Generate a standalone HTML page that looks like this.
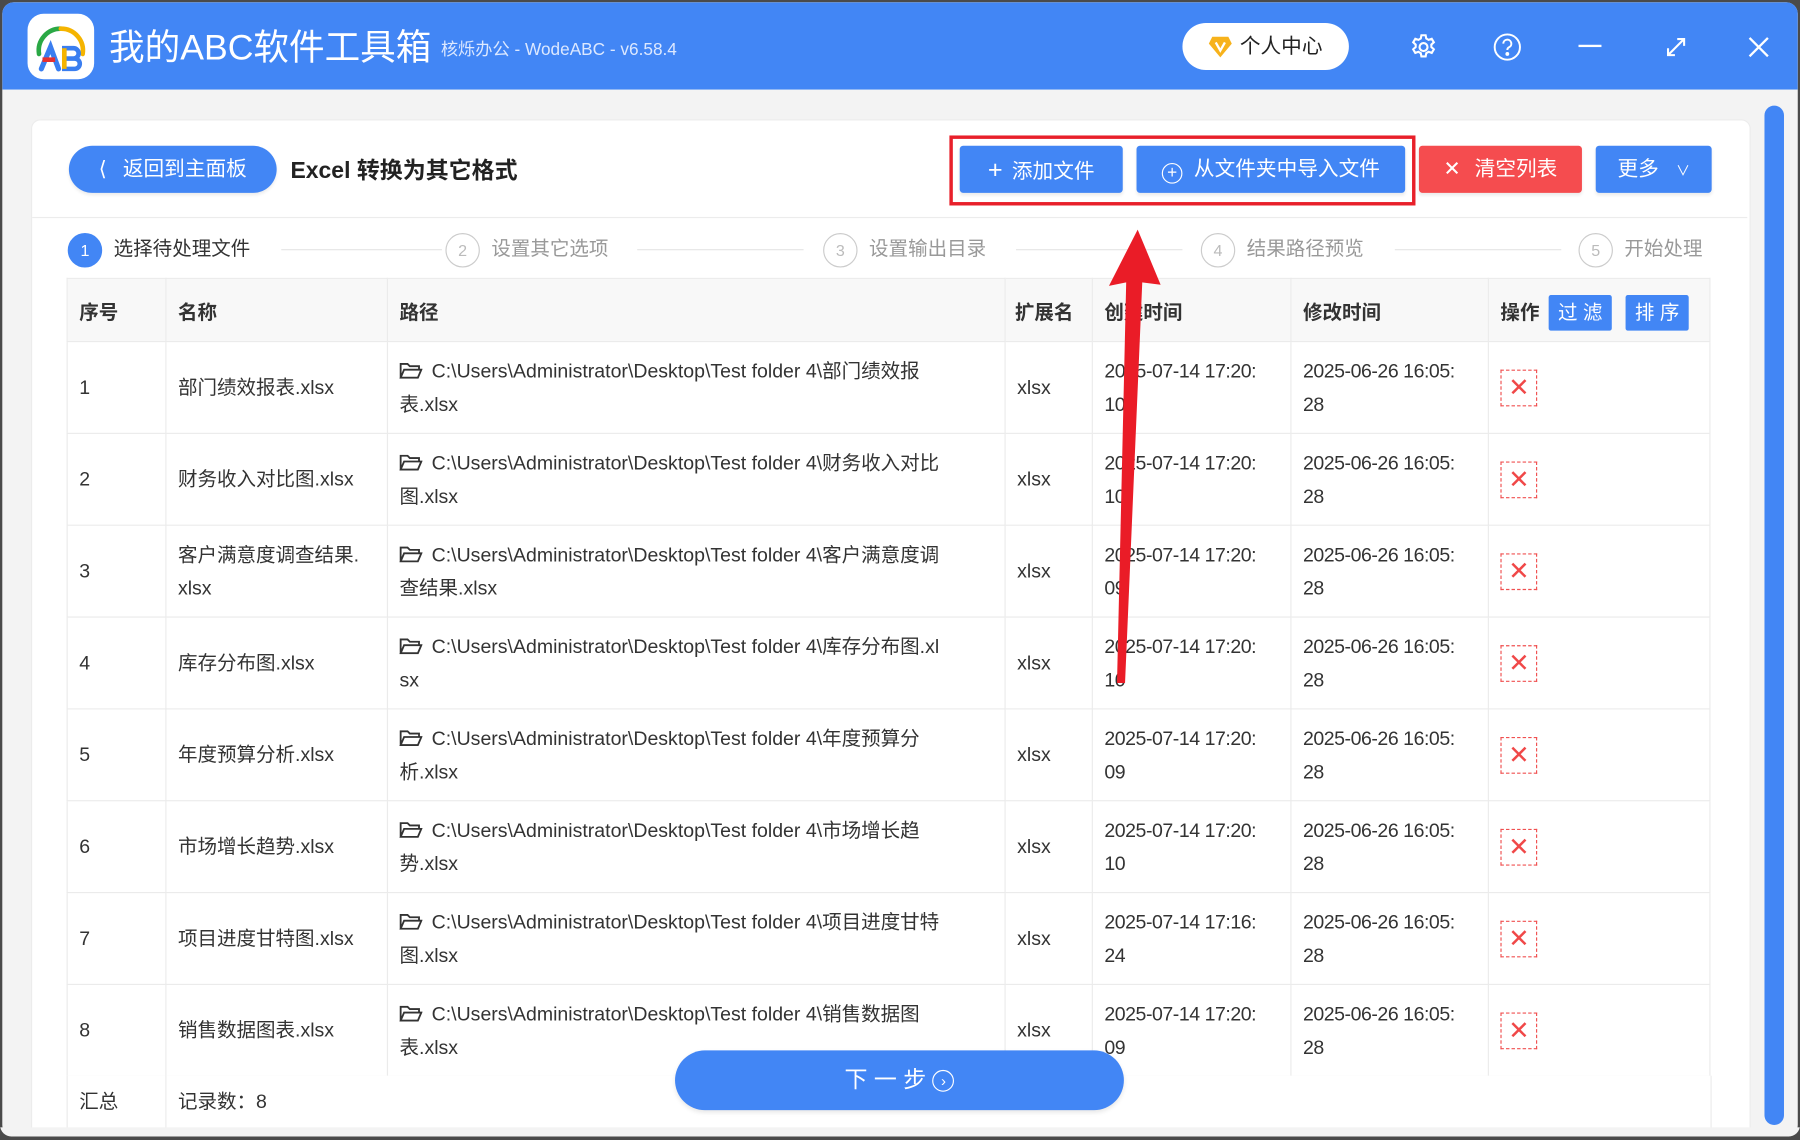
<!DOCTYPE html>
<html><head><meta charset="utf-8"><style>
html,body{margin:0;padding:0;width:1800px;height:1140px;overflow:hidden;background:#4a4a4a;}
#w{position:absolute;left:0;top:0;width:1568px;height:990px;overflow:hidden;transform:scale(1.148);transform-origin:0 0;font-family:"Liberation Sans","Noto Sans CJK SC",sans-serif;color:#333;border-radius:10px;}
.win{position:absolute;left:2px;top:2px;width:1564px;height:988px;background:#f3f3f3;border-radius:10px;overflow:hidden;}
.hdr{position:absolute;left:0;top:0;width:1564px;height:76px;background:#4286f5;}
.abs{position:absolute;}
.card{position:absolute;left:25px;top:102px;width:1496px;height:890px;background:#fff;border:1px solid #ececec;border-radius:8px;}
.btn{position:absolute;top:127px;height:41px;background:#4286f5;color:#fff;font-size:18px;line-height:41px;text-align:center;border-radius:3px;box-shadow:0 2px 3px rgba(0,0,0,.08);}
.step{position:absolute;top:202px;font-size:17px;color:#999;line-height:30px;}
.circ{display:inline-block;width:28px;height:28px;border:1px solid #ccc;border-radius:50%;text-align:center;line-height:28px;font-size:14px;color:#bbb;vertical-align:middle;margin-right:10px;}
.sline{position:absolute;top:217px;height:1px;background:#e6e6e6;}
table{position:absolute;left:58px;top:242px;border-collapse:collapse;table-layout:fixed;font-size:17px;}
td,th{border:1px solid #ebebeb;padding:0 10px;vertical-align:middle;text-align:left;line-height:29px;white-space:nowrap;}
th{height:50px;padding-top:4px;background:#f8f8f8;font-weight:bold;color:#333;}
td{height:79px;color:#333;}
td.d{letter-spacing:-0.4px;}
.del{display:inline-block;width:30px;height:30px;border:1px dashed #f05050;color:#f04848;text-align:center;line-height:30px;font-size:22px;}
.sm{display:inline-block;width:55px;height:31px;background:#4286f5;color:#fff;text-align:center;line-height:31px;font-weight:normal;border-radius:2px;margin-left:8px;}
.fd{display:inline-block;width:20px;height:14px;vertical-align:-1px;margin-right:8px;}
</style></head><body><div id="w">
<div class="win">
<div class="hdr">
 <div class="abs" style="left:22px;top:10px;width:58px;height:57px;background:#fff;border-radius:14px;">
  <svg width="58" height="57" viewBox="0 0 58 57"><path d="M10 35 A19 19 0 0 1 29 13" stroke="#2aa845" stroke-width="4" fill="none" stroke-linecap="round"/><path d="M29 13 A19 19 0 0 1 48 35" stroke="#f5b400" stroke-width="4" fill="none" stroke-linecap="round"/><path d="M12 48 L20 29 L27 48" stroke="#3a7ef0" stroke-width="4.5" fill="none" stroke-linecap="round"/><path d="M13 40 H24" stroke="#e53030" stroke-width="4"/><path d="M32 30 H40 a4.5 4.5 0 0 1 0 9 H32Z M32 39 H41 a4.5 4.5 0 0 1 0 9 H32Z" stroke="#3a7ef0" stroke-width="4" fill="none"/><path d="M32 30 V48" stroke="#f5b400" stroke-width="4"/></svg>
 </div>
 <div class="abs" style="left:93px;top:20px;font-size:31px;color:#fff;line-height:40px;">我的ABC软件工具箱</div>
 <div class="abs" style="left:382px;top:31px;font-size:15px;color:#dce8ff;line-height:22px;">核烁办公 - WodeABC - v6.58.4</div>
 <div class="abs" style="left:1028px;top:18px;width:145px;height:41px;background:#fff;border-radius:21px;font-size:18px;line-height:41px;color:#222;">
  <svg class="abs" style="left:22px;top:11px" width="22" height="20" viewBox="0 0 22 20"><path d="M4 1H18L21 7 11 19 1 7Z" fill="#f7b21b"/><path d="M7 6 L11 13 L15 6" stroke="#fff" stroke-width="2" fill="none"/></svg>
  <span class="abs" style="left:50px;">个人中心</span></div>
 <svg class="abs" style="left:1225px;top:26px" width="26" height="26" viewBox="0 0 24 24" fill="none" stroke="#fff" stroke-width="1.7"><circle cx="12" cy="12" r="3.2"/><path d="M10.3 2.5h3.4l.5 2.6 1.9 1.1 2.5-.9 1.7 2.9-2 1.8v2l2 1.8-1.7 2.9-2.5-.9-1.9 1.1-.5 2.6h-3.4l-.5-2.6-1.9-1.1-2.5.9-1.7-2.9 2-1.8v-2l-2-1.8 1.7-2.9 2.5.9 1.9-1.1z"/></svg>
 <svg class="abs" style="left:1298px;top:26px" width="26" height="26" viewBox="0 0 26 26" fill="none" stroke="#fff" stroke-width="1.7"><circle cx="13" cy="13" r="11"/><path d="M9.5 10a3.5 3.5 0 1 1 5 3.2c-1 .5-1.5 1.2-1.5 2.3"/><circle cx="13" cy="19" r=".8" fill="#fff"/></svg>
 <div class="abs" style="left:1373px;top:37px;width:20px;height:2px;background:#fff;"></div>
 <svg class="abs" style="left:1447px;top:28px" width="22" height="22" viewBox="0 0 22 22" fill="none" stroke="#fff" stroke-width="1.8"><path d="M4 18L18 4M12 4h6v6M4 12v6h6"/></svg>
 <svg class="abs" style="left:1519px;top:28px" width="22" height="22" viewBox="0 0 22 22" stroke="#fff" stroke-width="2"><path d="M3 3L19 19M19 3L3 19"/></svg>
</div>
<div class="card"></div>
</div>
<div class="btn" style="left:60px;width:181px;border-radius:21px;"><span style="margin-right:14px;font-size:18px;">&#10216;</span>返回到主面板</div>
<div class="abs" style="left:253px;top:135px;font-size:20px;font-weight:bold;color:#222;line-height:28px;">Excel 转换为其它格式</div>
<div class="btn" style="left:836px;width:142px;"><span style="font-size:22px;margin-right:8px;">+</span>添加文件</div>
<div class="btn" style="left:990px;width:234px;"><span style="display:inline-block;width:16px;height:16px;border:1.5px solid #fff;border-radius:50%;line-height:15px;font-size:15px;margin-right:10px;vertical-align:-2px;">+</span>从文件夹中导入文件</div>
<div class="btn" style="left:1236px;width:142px;background:#f54c4f;"><span style="margin-right:12px;">✕</span>清空列表</div>
<div class="btn" style="left:1390px;width:101px;">更多 <span style="font-size:12px;margin-left:10px;">∨</span></div>
<div class="abs" style="left:827px;top:118px;width:400px;height:55px;border:3px solid #e8202a;"></div>
<div class="abs" style="left:28px;top:189px;width:1494px;height:1px;background:#ececec;"></div>
<div class="step" style="left:59px;color:#333;"><span class="circ" style="background:#4286f5;border-color:#4286f5;color:#fff;">1</span>选择待处理文件</div>
<div class="sline" style="left:245px;width:140px"></div>
<div class="step" style="left:388px;"><span class="circ">2</span>设置其它选项</div>
<div class="sline" style="left:555px;width:145px"></div>
<div class="step" style="left:717px;"><span class="circ">3</span>设置输出目录</div>
<div class="sline" style="left:885px;width:145px"></div>
<div class="step" style="left:1046px;"><span class="circ">4</span>结果路径预览</div>
<div class="sline" style="left:1215px;width:145px"></div>
<div class="step" style="left:1375px;"><span class="circ">5</span>开始处理</div>
<table>
<colgroup><col style="width:86px"><col style="width:193px"><col style="width:538px"><col style="width:76px"><col style="width:173px"><col style="width:172px"><col style="width:193px"></colgroup>
<tr><th>序号</th><th>名称</th><th>路径</th><th style="padding:4px 8px 0">扩展名</th><th>创建时间</th><th>修改时间</th><th>操作<span class="sm">过 滤</span><span class="sm" style="margin-left:12px">排 序</span></th></tr>
<tr><td>1</td><td>部门绩效报表.xlsx</td><td><svg class="fd" viewBox="0 0 20 14" fill="none" stroke="#333" stroke-width="1.6"><path d="M1 13V1h6l2 2h8v3M1 13l3-7h15l-3 7z"/></svg>C:\Users\Administrator\Desktop\Test folder 4\部门绩效报<br>表.xlsx</td><td>xlsx</td><td class="d">2025-07-14 17:20:<br>10</td><td class="d">2025-06-26 16:05:<br>28</td><td><span class="del">✕</span></td></tr>
<tr><td>2</td><td>财务收入对比图.xlsx</td><td><svg class="fd" viewBox="0 0 20 14" fill="none" stroke="#333" stroke-width="1.6"><path d="M1 13V1h6l2 2h8v3M1 13l3-7h15l-3 7z"/></svg>C:\Users\Administrator\Desktop\Test folder 4\财务收入对比<br>图.xlsx</td><td>xlsx</td><td class="d">2025-07-14 17:20:<br>10</td><td class="d">2025-06-26 16:05:<br>28</td><td><span class="del">✕</span></td></tr>
<tr><td>3</td><td>客户满意度调查结果.<br>xlsx</td><td><svg class="fd" viewBox="0 0 20 14" fill="none" stroke="#333" stroke-width="1.6"><path d="M1 13V1h6l2 2h8v3M1 13l3-7h15l-3 7z"/></svg>C:\Users\Administrator\Desktop\Test folder 4\客户满意度调<br>查结果.xlsx</td><td>xlsx</td><td class="d">2025-07-14 17:20:<br>09</td><td class="d">2025-06-26 16:05:<br>28</td><td><span class="del">✕</span></td></tr>
<tr><td>4</td><td>库存分布图.xlsx</td><td><svg class="fd" viewBox="0 0 20 14" fill="none" stroke="#333" stroke-width="1.6"><path d="M1 13V1h6l2 2h8v3M1 13l3-7h15l-3 7z"/></svg>C:\Users\Administrator\Desktop\Test folder 4\库存分布图.xl<br>sx</td><td>xlsx</td><td class="d">2025-07-14 17:20:<br>10</td><td class="d">2025-06-26 16:05:<br>28</td><td><span class="del">✕</span></td></tr>
<tr><td>5</td><td>年度预算分析.xlsx</td><td><svg class="fd" viewBox="0 0 20 14" fill="none" stroke="#333" stroke-width="1.6"><path d="M1 13V1h6l2 2h8v3M1 13l3-7h15l-3 7z"/></svg>C:\Users\Administrator\Desktop\Test folder 4\年度预算分<br>析.xlsx</td><td>xlsx</td><td class="d">2025-07-14 17:20:<br>09</td><td class="d">2025-06-26 16:05:<br>28</td><td><span class="del">✕</span></td></tr>
<tr><td>6</td><td>市场增长趋势.xlsx</td><td><svg class="fd" viewBox="0 0 20 14" fill="none" stroke="#333" stroke-width="1.6"><path d="M1 13V1h6l2 2h8v3M1 13l3-7h15l-3 7z"/></svg>C:\Users\Administrator\Desktop\Test folder 4\市场增长趋<br>势.xlsx</td><td>xlsx</td><td class="d">2025-07-14 17:20:<br>10</td><td class="d">2025-06-26 16:05:<br>28</td><td><span class="del">✕</span></td></tr>
<tr><td>7</td><td>项目进度甘特图.xlsx</td><td><svg class="fd" viewBox="0 0 20 14" fill="none" stroke="#333" stroke-width="1.6"><path d="M1 13V1h6l2 2h8v3M1 13l3-7h15l-3 7z"/></svg>C:\Users\Administrator\Desktop\Test folder 4\项目进度甘特<br>图.xlsx</td><td>xlsx</td><td class="d">2025-07-14 17:16:<br>24</td><td class="d">2025-06-26 16:05:<br>28</td><td><span class="del">✕</span></td></tr>
<tr><td>8</td><td>销售数据图表.xlsx</td><td><svg class="fd" viewBox="0 0 20 14" fill="none" stroke="#333" stroke-width="1.6"><path d="M1 13V1h6l2 2h8v3M1 13l3-7h15l-3 7z"/></svg>C:\Users\Administrator\Desktop\Test folder 4\销售数据图<br>表.xlsx</td><td>xlsx</td><td class="d">2025-07-14 17:20:<br>09</td><td class="d">2025-06-26 16:05:<br>28</td><td><span class="del">✕</span></td></tr>
</table>
<div class="abs" style="left:58px;top:937px;width:1431px;height:46px;border-left:1px solid #ebebeb;border-right:1px solid #ebebeb;background:#fff;"></div>
<div class="abs" style="left:144px;top:937px;width:1px;height:46px;background:#ebebeb;"></div>
<div class="abs" style="left:69px;top:945px;font-size:17px;line-height:29px;">汇总</div>
<div class="abs" style="left:155px;top:945px;font-size:17px;line-height:29px;">记录数：8</div>
<div class="abs" style="left:588px;top:915px;width:391px;height:52px;background:#4286f5;border-radius:26px;color:#fff;font-size:20px;line-height:52px;text-align:center;box-shadow:0 2px 4px rgba(0,0,0,.1);">下 一 步 <span style="display:inline-block;width:17px;height:17px;border:1.5px solid #fff;border-radius:50%;font-size:13px;line-height:17px;vertical-align:1px;">›</span></div>
<div class="abs" style="left:0;top:982px;width:1568px;height:10px;background:#f3f3f3;"></div>
<div class="abs" style="left:1537px;top:92px;width:17px;height:888px;background:#4286f5;border-radius:9px;"></div>
<svg class="abs" style="left:0;top:0" width="1568" height="993"><polygon points="991,200 1011,248 995,246 980,595 973,595 981,246 966,249" fill="#ea1c27"/></svg>
</div></body></html>
